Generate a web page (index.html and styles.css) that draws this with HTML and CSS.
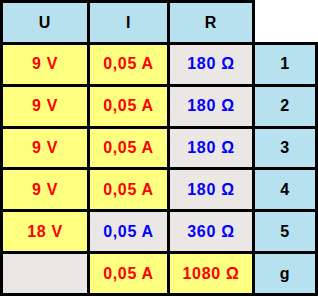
FILE: index.html
```html
<!DOCTYPE html>
<html>
<head>
<meta charset="utf-8">
<link rel="stylesheet" href="styles.css">
</head>
<body>
<div class="grid">
  <div class="c blue">U</div>
  <div class="c blue">I</div>
  <div class="c blue">R</div>
  <div class="c corner"></div>

  <div class="c yellow red">9 V</div>
  <div class="c yellow red">0,05 A</div>
  <div class="c gray bl">180 Ω</div>
  <div class="c blue">1</div>

  <div class="c yellow red">9 V</div>
  <div class="c yellow red">0,05 A</div>
  <div class="c gray bl">180 Ω</div>
  <div class="c blue">2</div>

  <div class="c yellow red">9 V</div>
  <div class="c yellow red">0,05 A</div>
  <div class="c gray bl">180 Ω</div>
  <div class="c blue">3</div>

  <div class="c yellow red">9 V</div>
  <div class="c yellow red">0,05 A</div>
  <div class="c gray bl">180 Ω</div>
  <div class="c blue">4</div>

  <div class="c yellow red">18 V</div>
  <div class="c gray bl">0,05 A</div>
  <div class="c gray bl">360 Ω</div>
  <div class="c blue">5</div>

  <div class="c gray"></div>
  <div class="c yellow red">0,05 A</div>
  <div class="c yellow red">1080 Ω</div>
  <div class="c blue">g</div>
</div>
</body>
</html>
```
FILE: styles.css
```css
html, body {
  margin: 0;
  padding: 0;
  background: #ffffff;
}
.grid {
  box-sizing: border-box;
  width: 318px;
  height: 296px;
  padding: 3px;
  background: #000000;
  display: grid;
  grid-template-columns: 84px 77px 82px 60px;
  grid-template-rows: 39px repeat(6, 1fr);
  column-gap: 3px;
  row-gap: 3px;
  font-family: "Liberation Sans", Arial, sans-serif;
  font-weight: bold;
  font-size: 16px;
  letter-spacing: 0.7px;
}
.c {
  display: flex;
  align-items: center;
  justify-content: center;
  color: #000000;
}
.blue { background: #b7e1ee; }
.yellow { background: #ffff80; }
.gray { background: #ebe7e4; }
.red { color: #ff0000; }
.bl { color: #0000ff; }
.corner {
  background: #ffffff;
  margin-top: -3px;
  margin-right: -3px;
}
```
